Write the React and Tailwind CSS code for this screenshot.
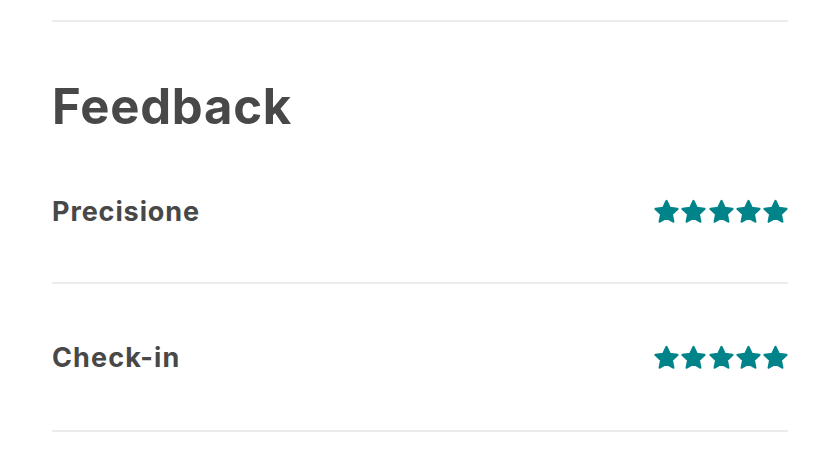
import React from 'react';

const Star = () => (
  <svg width="25" height="25" viewBox="1 0.8 22 22" className="shrink-0">
    <path
      d="M12 2.6l2.9 6.1 6.7.8-4.9 4.6 1.3 6.6L12 17.4l-6 3.3 1.3-6.6-4.9-4.6 6.7-.8z"
      fill="#008489"
      stroke="#008489"
      strokeWidth="2"
      strokeLinejoin="round"
    />
  </svg>
);

const Stars = () => (
  <div className="flex items-center gap-[2.25px]">
    {[0, 1, 2, 3, 4].map((i) => <Star key={i} />)}
  </div>
);

export default function App() {
  return (
    <div className="w-[840px] h-[460px] bg-white overflow-hidden pt-[20px] px-[52px] text-[#484848] font-['Inter',sans-serif]">
      <div className="h-[2px] bg-[#ebebeb]" />
      <h2 className="mt-[60px] text-[49px] leading-none font-bold tracking-[0.8px]">Feedback</h2>
      <div className="flex items-center justify-between pt-[67px] pb-[57px] border-b-2 border-[#ebebeb]">
        <span className="text-[27px] leading-none font-bold tracking-[0.9px]">Precisione</span>
        <Stars />
      </div>
      <div className="flex items-center justify-between pt-[60px] pb-[59px] border-b-2 border-[#ebebeb]">
        <span className="text-[27px] leading-none font-bold tracking-[1.1px]">Check-in</span>
        <Stars />
      </div>
    </div>
  );
}
